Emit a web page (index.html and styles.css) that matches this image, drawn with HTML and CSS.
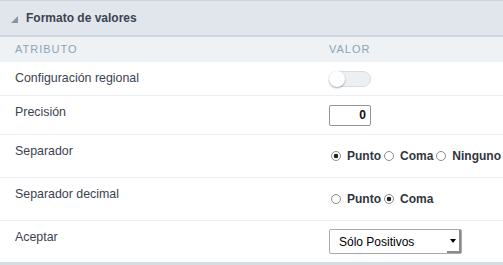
FILE: index.html
```html
<!DOCTYPE html>
<html lang="es">
<head>
    <meta charset="UTF-8">
    <meta name="viewport" content="width=device-width, initial-scale=1.0">
    <title>Formato de valores</title>
    <link rel="stylesheet" href="styles.css">
</head>
<body>
    <div class="panel">
        <div class="panel-header">
            <span class="caret"></span>
            <h2>Formato de valores</h2>
        </div>
        <div class="props">
            <div class="props-head">
                <div class="cell">Atributo</div>
                <div class="cell">Valor</div>
            </div>
            <div class="prop-row row-1">
                <div class="cell label">Configuración regional</div>
                <div class="cell value"><span class="toggle"></span></div>
            </div>
            <div class="prop-row row-2">
                <div class="cell label">Precisión</div>
                <div class="cell value"><input class="num" type="text" value="0"></div>
            </div>
            <div class="prop-row row-3">
                <div class="cell label">Separador</div>
                <div class="cell value">
                    <label class="opt"><span class="radio checked"></span>Punto</label>
                    <label class="opt"><span class="radio"></span>Coma</label>
                    <label class="opt"><span class="radio"></span>Ninguno</label>
                </div>
            </div>
            <div class="prop-row row-4">
                <div class="cell label">Separador decimal</div>
                <div class="cell value">
                    <label class="opt"><span class="radio"></span>Punto</label>
                    <label class="opt"><span class="radio checked"></span>Coma</label>
                </div>
            </div>
            <div class="prop-row row-5">
                <div class="cell label">Aceptar</div>
                <div class="cell value">
                    <div class="select">
                        <span>Sólo Positivos</span>
                        <span class="select-btn"><span class="arrow"></span></span>
                    </div>
                </div>
            </div>
        </div>
    </div>
</body>
</html>
```

FILE: styles.css
```css
body {
    margin: 0;
    font-family: "Liberation Sans", Arial, sans-serif;
    background-color: #ffffff;
}

.panel {
    border-top: 1px solid #cdd6dc;
    border-bottom: 3px solid #d6dee3;
}

.panel-header {
    height: 34px;
    display: flex;
    align-items: center;
    padding-left: 11px;
    background-color: #e0e6ec;
    border-bottom: 2px solid #cfd8de;
}

.caret {
    width: 0;
    height: 0;
    border-left: 7px solid transparent;
    border-bottom: 7px solid #8a95a0;
    margin: 2px 8px 0 0;
}

.panel-header h2 {
    margin: 0;
    font-size: 12px;
    font-weight: bold;
    color: #3b4350;
}

.props-head,
.prop-row {
    display: grid;
    grid-template-columns: 314px 1fr;
}

.cell {
    padding-left: 15px;
}

.props-head {
    height: 25px;
    line-height: 25px;
    background-color: #eef2f5;
    font-size: 11px;
    letter-spacing: 1px;
    text-transform: uppercase;
    color: #8ba5b6;
}

.prop-row {
    border-bottom: 1px solid #eceff1;
    font-size: 12.4px;
    color: #3b4350;
}

.prop-row:last-child {
    border-bottom: none;
}

.row-1 { height: 33px; }
.row-2 { height: 38px; }
.row-3 { height: 42px; }
.row-4 { height: 42px; }
.row-5 { height: 41px; }

.label {
    padding-top: 9px;
    line-height: 15px;
}

.value {
    display: flex;
    align-items: center;
}

.toggle {
    display: inline-flex;
    width: 40px;
    height: 14px;
    border: 1px solid #d6dce1;
    border-radius: 8px;
    background-color: #edf0f3;
    align-items: center;
}

.toggle::before {
    content: "";
    width: 16px;
    height: 16px;
    margin-left: -1px;
    border-radius: 50%;
    background-color: #fff;
    box-shadow: 0 1px 2px rgba(0, 0, 0, 0.35);
}

.num {
    box-sizing: border-box;
    width: 42px;
    height: 21px;
    margin: 0;
    padding: 0 4px 0 0;
    border: 1px solid #8e959b;
    border-radius: 2px;
    text-align: right;
    font-family: inherit;
    font-size: 12px;
    font-weight: bold;
    color: #111;
}

.opt {
    display: inline-flex;
    align-items: center;
    font-size: 12px;
    font-weight: bold;
    color: #2f3640;
    margin-right: 3px;
}

.radio {
    box-sizing: border-box;
    width: 10px;
    height: 10px;
    margin: 0 6px 0 2px;
    border: 1px solid #8c8c8c;
    border-radius: 50%;
    background-color: #fff;
}

.opt + .opt .radio {
    margin-left: 0;
}

.radio.checked {
    background: radial-gradient(circle, #222 0, #222 2px, #fff 2.6px);
}

.select {
    box-sizing: border-box;
    width: 133px;
    height: 25px;
    display: flex;
    align-items: center;
    justify-content: space-between;
    padding-left: 9px;
    border: 1px solid #a9a9a9;
    border-radius: 2px;
    font-size: 12px;
    color: #000;
}

.select-btn {
    display: flex;
    align-items: center;
    justify-content: center;
    width: 14px;
    height: 100%;
    border-right: 2px solid #8a8a8a;
    border-bottom: 2px solid #8a8a8a;
    box-sizing: border-box;
}

.arrow {
    width: 0;
    height: 0;
    border-left: 3px solid transparent;
    border-right: 3px solid transparent;
    border-top: 4px solid #000;
}
```
